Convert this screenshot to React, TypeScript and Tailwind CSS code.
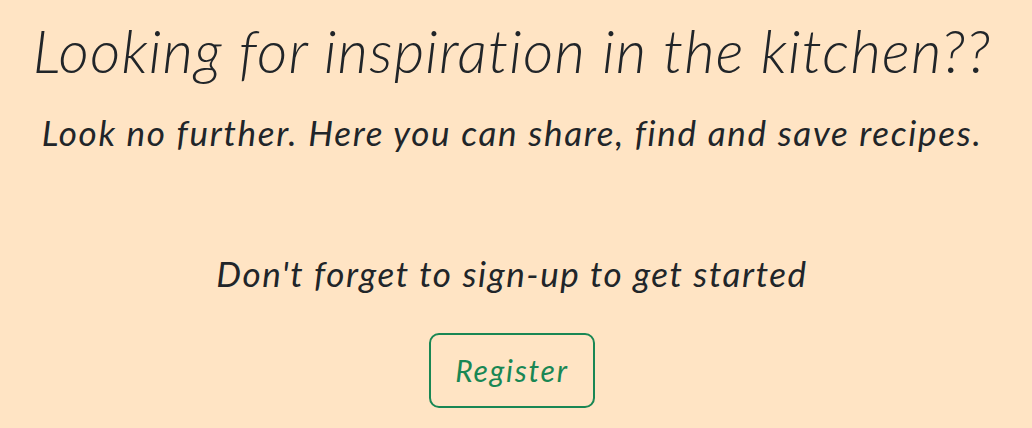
import React from "react";

export default function App() {
  return (
    <div className="min-h-[428px] w-full bg-[#ffe4c4] pr-[8px] text-[#212529] font-['Lato','Open_Sans',sans-serif] italic">
      <div className="flex flex-col items-center text-center">
        <h1 className="mt-[16px] text-[59px] font-light leading-[1.2] tracking-[1.2px]">
          Looking for inspiration in the kitchen??
        </h1>
        <p className="mt-[24px] text-[35px] leading-[1.2] tracking-[1.7px]">
          Look no further. Here you can share, find and save recipes.
        </p>
        <p className="mt-[99px] text-[35px] leading-[1.2] tracking-[1.6px]">
          Don't forget to sign-up to get started
        </p>
        <button className="mt-[39px] h-[75px] w-[166px] rounded-[10px] border-2 border-[#198754] text-[30px] tracking-[1.8px] text-[#198754]">
          Register
        </button>
      </div>
    </div>
  );
}
